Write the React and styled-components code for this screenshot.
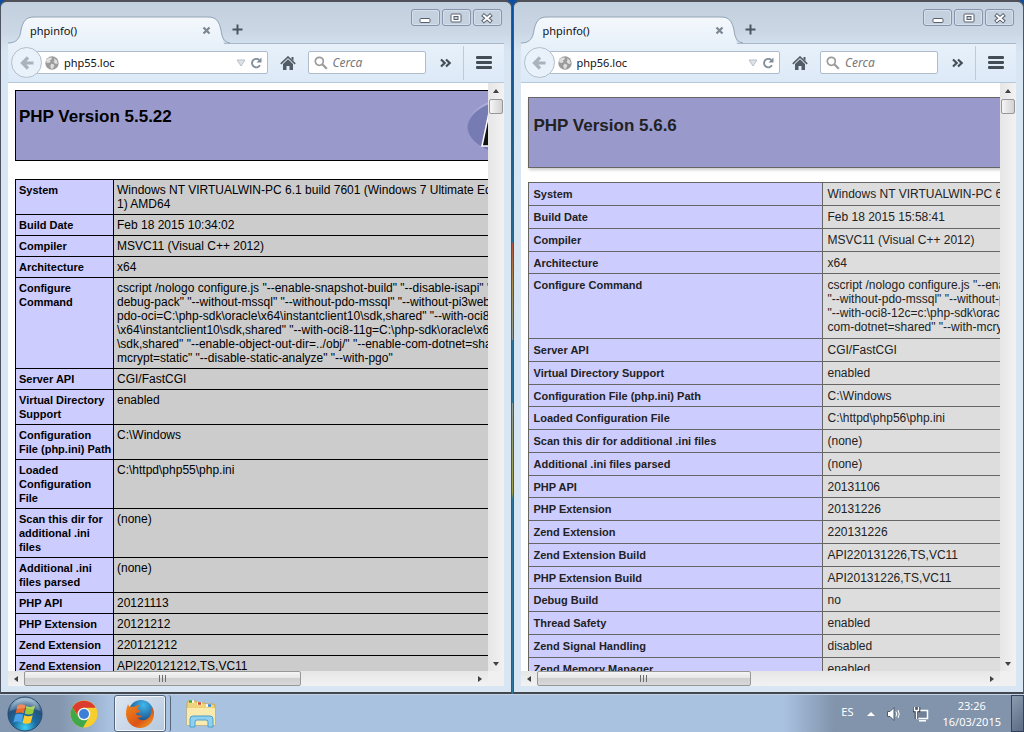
import React from 'react';
import styled, { createGlobalStyle, css } from 'styled-components';

const uiFont = '"Noto Sans", "Open Sans", sans-serif';
const pageFont = '"Liberation Sans", Arial, sans-serif';

const php55 = [
  ['System', ['Windows NT VIRTUALWIN-PC 6.1 build 7601 (Windows 7 Ultimate Edition', '1) AMD64']],
  ['Build Date', ['Feb 18 2015 10:34:02']],
  ['Compiler', ['MSVC11 (Visual C++ 2012)']],
  ['Architecture', ['x64']],
  ['Configure Command', [
    'cscript /nologo configure.js "--enable-snapshot-build" "--disable-isapi" "--',
    'debug-pack" "--without-mssql" "--without-pdo-mssql" "--without-pi3web"',
    'pdo-oci=C:\\php-sdk\\oracle\\x64\\instantclient10\\sdk,shared" "--with-oci8=',
    '\\x64\\instantclient10\\sdk,shared" "--with-oci8-11g=C:\\php-sdk\\oracle\\x64',
    '\\sdk,shared" "--enable-object-out-dir=../obj/" "--enable-com-dotnet=shared"',
    'mcrypt=static" "--disable-static-analyze" "--with-pgo"',
  ]],
  ['Server API', ['CGI/FastCGI']],
  ['Virtual Directory Support', ['enabled']],
  ['Configuration File (php.ini) Path', ['C:\\Windows']],
  ['Loaded Configuration File', ['C:\\httpd\\php55\\php.ini']],
  ['Scan this dir for additional .ini files', ['(none)']],
  ['Additional .ini files parsed', ['(none)']],
  ['PHP API', ['20121113']],
  ['PHP Extension', ['20121212']],
  ['Zend Extension', ['220121212']],
  ['Zend Extension Build', ['API220121212,TS,VC11']],
];

const php56 = [
  ['System', ['Windows NT VIRTUALWIN-PC 6.1']],
  ['Build Date', ['Feb 18 2015 15:58:41']],
  ['Compiler', ['MSVC11 (Visual C++ 2012)']],
  ['Architecture', ['x64']],
  ['Configure Command', [
    'cscript /nologo configure.js "--enable',
    '"--without-pdo-mssql" "--without-pi3',
    '"--with-oci8-12c=c:\\php-sdk\\oracle',
    'com-dotnet=shared" "--with-mcrypt',
  ]],
  ['Server API', ['CGI/FastCGI']],
  ['Virtual Directory Support', ['enabled']],
  ['Configuration File (php.ini) Path', ['C:\\Windows']],
  ['Loaded Configuration File', ['C:\\httpd\\php56\\php.ini']],
  ['Scan this dir for additional .ini files', ['(none)']],
  ['Additional .ini files parsed', ['(none)']],
  ['PHP API', ['20131106']],
  ['PHP Extension', ['20131226']],
  ['Zend Extension', ['220131226']],
  ['Zend Extension Build', ['API220131226,TS,VC11']],
  ['PHP Extension Build', ['API20131226,TS,VC11']],
  ['Debug Build', ['no']],
  ['Thread Safety', ['enabled']],
  ['Zend Signal Handling', ['disabled']],
  ['Zend Memory Manager', ['enabled']],
];

export default function App() {
  return (
    <>
      <GlobalStyle />
      <Screen>
        <Desktop>
          <BrowserWindow id="php55" address="php55.loc" thumb="62%">
            <InfoPage>
              <Banner>
                <h1>PHP Version 5.5.22</h1>
                <PhpLogo />
              </Banner>
              <InfoTable rows={php55} />
            </InfoPage>
          </BrowserWindow>
          <BrowserWindow id="php56" address="php56.loc" thumb="48%">
            <InfoPage $modern>
              <Banner $modern>
                <h1>PHP Version 5.6.6</h1>
              </Banner>
              <InfoTable rows={php56} modern />
            </InfoPage>
          </BrowserWindow>
        </Desktop>
        <Taskbar />
      </Screen>
    </>
  );
}

function InfoTable({ rows, modern }) {
  return (
    <Table $modern={modern}>
      <tbody>
        {rows.map(([label, lines]) => (
          <tr key={label}>
            <th scope="row">{label}</th>
            <td>{lines.join('\n')}</td>
          </tr>
        ))}
      </tbody>
    </Table>
  );
}

function BrowserWindow({ id, address, thumb, children }) {
  return (
    <Frame>
      <TitleBar>
        <Tab>
          <TabShape id={id + '-tab'} />
          <TabTitle>phpinfo()</TabTitle>
          <IconButton aria-label="Close tab">
            <svg width="9" height="9" viewBox="0 0 9 9"><path d="M1.5 1.5l6 6M7.5 1.5l-6 6" stroke="#7d8791" strokeWidth="2.2" /></svg>
          </IconButton>
        </Tab>
        <NewTab aria-label="New tab">
          <svg width="11" height="11" viewBox="0 0 11 11"><path d="M5.5 .5v10M.5 5.5h10" stroke="#4b565f" strokeWidth="2" /></svg>
        </NewTab>
        <Controls>
          <ControlButton aria-label="Minimize">
            <svg width="12" height="12" viewBox="0 0 12 12"><rect x="1" y="6.5" width="10" height="4" rx="1" fill="#fff" stroke="#565f6e" /></svg>
          </ControlButton>
          <ControlButton aria-label="Maximize">
            <svg width="12" height="12" viewBox="0 0 12 12">
              <rect x="1" y="2" width="10" height="8" rx="1" fill="#fff" stroke="#565f6e" />
              <rect x="4" y="4.5" width="4" height="3" fill="#c5d1df" stroke="#565f6e" />
            </svg>
          </ControlButton>
          <ControlButton aria-label="Close">
            <svg width="12" height="12" viewBox="0 0 12 12">
              <path d="M1.5 2.500l9 7.500M10.500 2.500l-9 7.500" stroke="#565f6e" strokeWidth="4" />
              <path d="M2.200 3l7.600 6.400M9.800 3l-7.600 6.400" stroke="#fff" strokeWidth="2" />
            </svg>
          </ControlButton>
        </Controls>
      </TitleBar>
      <Toolbar>
        <BackButton aria-label="Back">
          <svg width="14" height="14" viewBox="0 0 14 14"><path d="M8 1.5L2.500 7 8 12.500M3 7h10.500" fill="none" stroke="#a9b2bd" strokeWidth="3.2" /></svg>
        </BackButton>
        <AddressBar>
          <GlobeIcon />
          <AddressInput id={id + '-address'} aria-label="Address" defaultValue={address} />
          <IconButton aria-label="History">
            <svg width="10" height="8" viewBox="0 0 10 8"><path d="M1 1h8L5 7z" fill="#dfe3e8" stroke="#b9c0c9" /></svg>
          </IconButton>
          <IconButton aria-label="Reload">
            <svg width="12" height="12" viewBox="0 0 12 12">
              <path d="M9.300 3A4.300 4.300 0 1 0 10 8.300" fill="none" stroke="#7f8c99" strokeWidth="1.8" />
              <path d="M11.500 .5v5h-5z" fill="#7f8c99" />
            </svg>
          </IconButton>
        </AddressBar>
        <HomeButton aria-label="Home">
          <svg width="16" height="14" viewBox="0 0 16 14">
            <path d="M3 8l5-4.800L13 8v6H9.500v-4h-3v4H3z" fill="#515c66" />
            <path d="M.8 7.800L8 1l7.200 6.800" fill="none" stroke="#515c66" strokeWidth="1.6" />
            <path d="M11.500 1h2v4l-2-2z" fill="#515c66" />
          </svg>
        </HomeButton>
        <SearchBox>
          <svg width="14" height="14" viewBox="0 0 14 14">
            <circle cx="5.300" cy="5.300" r="4" fill="none" stroke="#9b9b9b" strokeWidth="1.7" />
            <path d="M8.300 8.300l4.500 4.500" stroke="#9b9b9b" strokeWidth="2.2" />
          </svg>
          <SearchInput id={id + '-search'} aria-label="Cerca" placeholder="Cerca" />
        </SearchBox>
        <MoreButton aria-label="More tools">
          <svg width="12" height="10" viewBox="0 0 12 10"><path d="M1 1.5L4.700 5 1 8.500M6 1.500L9.700 5 6 8.500" fill="none" stroke="#434d56" strokeWidth="2.2" /></svg>
        </MoreButton>
        <MenuButton aria-label="Menu">
          <svg width="16" height="13" viewBox="0 0 16 13"><path d="M1.200 1.500h13.600M1.200 6.500h13.600M1.200 11.500h13.600" stroke="#434d56" strokeWidth="2.8" strokeLinecap="round" /></svg>
        </MenuButton>
      </Toolbar>
      <Viewport>
        <Page>{children}</Page>
        <VerticalBar>
          <Arrow direction="up" />
          <VerticalThumb />
          <Arrow direction="down" />
        </VerticalBar>
        <HorizontalBar>
          <Arrow direction="left" />
          <Track>
            <HorizontalThumb $width={thumb}>
              <svg width="8" height="7" viewBox="0 0 8 7"><path d="M.5 0v7M3.500 0v7M6.500 0v7" stroke="#6d6d6d" /></svg>
            </HorizontalThumb>
          </Track>
          <Arrow direction="right" />
        </HorizontalBar>
      </Viewport>
    </Frame>
  );
}

function TabShape({ id }) {
  return (
    <TabSvg viewBox="0 0 216 28" preserveAspectRatio="none">
      <defs>
        <linearGradient id={id} x1="0" y1="0" x2="0" y2="1">
          <stop offset="0" stopColor="#f4f8fc" />
          <stop offset="1" stopColor="#e8f1fa" />
        </linearGradient>
      </defs>
      <path d="M0 28V27C9 27 12 22 13 14C15 5 18 1 26 1H200C208 1 211 5 213 14C214 22 216 26 216 28z" fill={`url(#${id})`} />
      <path d="M0 27C9 27 12 22 13 14C15 5 18 1 26 1H200C208 1 211 5 213 14C214 22 216 26 222 27" fill="none" stroke="#93a3b5" />
    </TabSvg>
  );
}

function GlobeIcon() {
  return (
    <svg width="14" height="14" viewBox="0 0 14 14">
      <circle cx="7" cy="7" r="6.700" fill="#9b9b9b" />
      <path d="M1 4.500C2 2 4.500 1 6.500 1.500L7 3 5 4.500 5.500 6 3.500 7 1.500 6.500zM9 2l3 2.500.8 3-2 .5-2.300-2 1-2zM6.500 7.500l3 1.500-1.500 3.500-2 .3-.8-3z" fill="#dedede" />
    </svg>
  );
}

function PhpLogo() {
  return (
    <LogoSvg width="120" height="67" viewBox="0 0 120 67">
      <defs>
        <linearGradient id="logoRim" x1="0" y1="0" x2="0" y2="1">
          <stop offset="0" stopColor="#b9bce0" />
          <stop offset="1" stopColor="#5c5f9c" />
        </linearGradient>
      </defs>
      <ellipse cx="60" cy="34" rx="59" ry="31" fill="url(#logoRim)" />
      <ellipse cx="61" cy="35" rx="59" ry="30" fill="#777bb4" />
      <path d="M24 16h22q12 2 9 15-3 12-15 12h-9l-2 11H16z" fill="#111" stroke="#fff" strokeWidth="1.5" />
    </LogoSvg>
  );
}

const arrowPaths = {
  up: 'M1 6l3-4 3 4z',
  down: 'M1 2l3 4 3-4z',
  left: 'M6 1L2 4l4 3z',
  right: 'M2 1l4 3-4 3z',
};

function Arrow({ direction }) {
  return (
    <ArrowButton aria-label={'Scroll ' + direction}>
      <svg width="8" height="8" viewBox="0 0 8 8"><path d={arrowPaths[direction]} fill="#404040" /></svg>
    </ArrowButton>
  );
}

function Taskbar() {
  return (
    <Bar>
      <StartButton aria-label="Start">
        <svg width="36" height="36" viewBox="0 0 36 36">
          <defs>
            <radialGradient id="orb" cx=".5" cy=".9" r=".85">
              <stop offset="0" stopColor="#3fd0f5" />
              <stop offset=".4" stopColor="#1c6ba0" />
              <stop offset=".75" stopColor="#24527f" />
              <stop offset="1" stopColor="#9db9d0" />
            </radialGradient>
          </defs>
          <circle cx="18" cy="18" r="17" fill="url(#orb)" stroke="#27476b" />
          <path d="M10.500 9.500q4-2.500 8 0l-1.800 8q-4-2-8 0z" fill="#ee6a2c" />
          <path d="M19.500 10q4 2 8.500-.5l-2 8q-4 2.200-8.300 0z" fill="#9ccb3c" />
          <path d="M8.300 18.800q4-2.200 8 0l-1.800 7.700q-4-2-8 0z" fill="#4aa3e8" />
          <path d="M17.400 19.200q4 2.200 8.300 0l-2 7.600q-4 2-8.200 0z" fill="#fbca2e" />
          <path d="M3 15C5 6 12 3 18 3s13 3 15 12q-15-6-30 0z" fill="#fff" opacity=".22" />
        </svg>
      </StartButton>
      <TaskButton aria-label="Google Chrome">
        <svg width="28" height="28" viewBox="0 0 28 28">
          <circle cx="14" cy="14" r="13.500" fill="#f7ce2c" />
          <path d="M2.300 7.300A13.500 13.500 0 0 1 25.700 7.700H14a6.300 6.300 0 0 0-6 8z" fill="#db3c2e" />
          <path d="M2.300 7.300A13.500 13.500 0 0 0 13 27.500l6-10.200a6.300 6.300 0 0 1-10.700-.5z" fill="#3ea84a" />
          <circle cx="14" cy="14" r="6.300" fill="#f2f5f8" />
          <circle cx="14" cy="14" r="5" fill="#3d7fd6" />
        </svg>
      </TaskButton>
      <TaskGroup>
        <TaskButton $active aria-label="Mozilla Firefox">
          <svg width="30" height="30" viewBox="0 0 30 30">
            <defs>
              <radialGradient id="planet" cx=".6" cy=".2" r=".8">
                <stop offset="0" stopColor="#3fb8ec" />
                <stop offset="1" stopColor="#133a77" />
              </radialGradient>
              <linearGradient id="fox" x1="0" y1="0" x2="1" y2="1">
                <stop offset="0" stopColor="#f08a1c" />
                <stop offset=".6" stopColor="#dc5216" />
                <stop offset="1" stopColor="#f5b02a" />
              </linearGradient>
            </defs>
            <circle cx="16" cy="13.500" r="12.500" fill="url(#planet)" />
            <path d="M3 5q-2.500 6-2 11C2 24 8 29 15 29c8 0 13.500-6 14-13 .2-4-1-7-3-9 1 6 0 11-4 13-3 2-8 1.500-9.500-1.500 2 .5 3.500 0 5-1.500-2-.8-5 .2-6.500-2 .2-1.500 2.500-1.500 4.500-1.700 0-1.800-2-2.300-2.800-3.300.2-1.700 1-3 2.300-4C12 6 10 7 9 8 7 7.500 6 7.500 5 8q-1.500-1-2-3z" fill="url(#fox)" />
          </svg>
        </TaskButton>
      </TaskGroup>
      <TaskButton aria-label="Windows Explorer">
        <svg width="32" height="30" viewBox="0 0 32 30">
          <path d="M2 4l1-2h8l1 2h8l1 1h8l1 2v19H2z" fill="#eed27c" stroke="#c9a94e" />
          <path d="M4 2.500h5M12 4.500h5M21 6.500h5" stroke="#fff" strokeWidth="2.5" />
          <path d="M4 2.500h3" stroke="#32a836" strokeWidth="2.5" />
          <path d="M13 4.500h3" stroke="#d8432f" strokeWidth="2.5" />
          <path d="M23 6.500h3" stroke="#3586dd" strokeWidth="2.5" />
          <path d="M2 9h28v17H2z" fill="#f9eab0" />
          <path d="M5 28v-8q0-3 3-3h17q3 0 3 3v8h-5v-5q0-2-2-2h-9q-2 0-2 2v5z" fill="#8fd0f0" stroke="#4c9fcb" />
        </svg>
      </TaskButton>
      <Tray>
        <Language>ES</Language>
        <IconButton aria-label="Show hidden icons">
          <svg width="8" height="5" viewBox="0 0 8 5"><path d="M0 5l4-4 4 4z" fill="#fff" /></svg>
        </IconButton>
        <IconButton aria-label="Volume">
          <svg width="16" height="16" viewBox="0 0 16 16">
            <path d="M1.500 5.500h2.500L8 1.500v13L4 10.500H1.500z" fill="#fff" stroke="#4d5a6c" />
            <path d="M10 5.500q1.500 2.500 0 5M12 4q2.500 4 0 8" fill="none" stroke="#fff" />
          </svg>
        </IconButton>
        <IconButton aria-label="Network">
          <svg width="16" height="16" viewBox="0 0 16 16">
            <rect x="4.500" y="4.500" width="10" height="8" fill="#6f8097" stroke="#fff" strokeWidth="1.5" />
            <path d="M6 14.800h7" stroke="#fff" strokeWidth="1.5" />
            <path d="M1.500 1v3.500h4V1M3.500 4.500V13" fill="none" stroke="#27303d" strokeWidth="3.5" />
            <path d="M1.500 1v3.500h4V1M3.500 4.500V13" fill="none" stroke="#fff" strokeWidth="1.6" />
          </svg>
        </IconButton>
        <Clock>
          <span>23:26</span>
          <span>16/03/2015</span>
        </Clock>
        <ShowDesktop aria-label="Show desktop" />
      </Tray>
    </Bar>
  );
}

const GlobalStyle = createGlobalStyle`
  * {
    box-sizing: border-box;
  }
  body {
    margin: 0;
    font-family: ${uiFont};
    font-size: 11px;
  }
  button {
    margin: 0;
    padding: 0;
    border: 0;
    background: none;
    color: inherit;
    font: inherit;
  }
  svg {
    display: block;
    flex: none;
  }
`;

const Screen = styled.div`
  height: 100vh;
  display: flex;
  flex-direction: column;
  overflow: hidden;
`;

const Desktop = styled.main`
  flex: 1;
  min-height: 0;
  display: grid;
  grid-template-columns: 1fr 1fr;
  gap: 1px;
  background: linear-gradient(#0b4fa5, #1f5f8c 20%, #2a6f98 35%, #b5503c 35%, #a8904c 41%, #8c9c9c 49%, #2a789f 49%, #2a789f 58%, #8c9c9c 58%, #a0a040 71%, #2a789f 72%);
`;

const Frame = styled.section`
  min-width: 0;
  min-height: 0;
  display: flex;
  flex-direction: column;
  padding: 0 7px 6px;
  border: 1px solid #4d5660;
  border-top: 2px solid #4f5058;
  border-bottom: 2px solid #43474f;
  border-radius: 7px 7px 0 0;
  background: linear-gradient(#c2cfde, #cbd7e4 30px, #d8e5f2 50px);
`;

const TitleBar = styled.header`
  height: 42px;
  display: flex;
  align-items: flex-end;
  border-bottom: 1px solid #a9b9ca;
`;

const Tab = styled.div`
  position: relative;
  width: 216px;
  height: 28px;
  margin-bottom: -1px;
  padding: 0 11px 0 22px;
  display: flex;
  align-items: center;
  justify-content: space-between;
`;

const TabSvg = styled.svg`
  position: absolute;
  inset: 0;
  width: 100%;
  height: 100%;
  overflow: visible;
`;

const TabTitle = styled.span`
  position: relative;
  color: #111;
`;

const IconButton = styled.button`
  position: relative;
  padding: 2px;
`;

const NewTab = styled.button`
  padding: 8px;
`;

const Controls = styled.div`
  align-self: flex-start;
  margin: 7px 2px 0 auto;
  display: flex;
  gap: 2px;
`;

const ControlButton = styled.button`
  width: 29px;
  height: 17px;
  display: flex;
  align-items: center;
  justify-content: center;
  border: 1px solid #8593ab;
  border-radius: 3px;
  background: #c5d1df;
  box-shadow: inset 0 0 0 1px #d6e0ea;
`;

const Toolbar = styled.div`
  height: 39px;
  display: flex;
  align-items: center;
  padding: 0 3px 1px;
  border-bottom: 1px solid #b4c7db;
  background: linear-gradient(#e8f1fa, #dce9f7);
`;

const BackButton = styled.button`
  position: relative;
  width: 31px;
  height: 31px;
  display: flex;
  align-items: center;
  justify-content: center;
  border: 1px solid #b3bfcd;
  border-radius: 50%;
  background: #e9f1fa;
`;

const AddressBar = styled.div`
  flex: 1;
  min-width: 0;
  height: 23px;
  margin-left: -5px;
  padding: 0 3px 0 7px;
  display: flex;
  align-items: center;
  border: 1px solid #aebccc;
  border-radius: 0 2px 2px 0;
  background: #fff;
`;

const inputReset = css`
  flex: 1;
  min-width: 0;
  padding: 0 5px;
  border: 0;
  outline: 0;
  background: none;
  font: 11px ${uiFont};
  color: #111;
`;

const AddressInput = styled.input`
  ${inputReset}
`;

const HomeButton = styled.button`
  padding: 0 12px;
`;

const SearchBox = styled.div`
  width: 118px;
  height: 23px;
  padding-left: 5px;
  display: flex;
  align-items: center;
  border: 1px solid #aebccc;
  border-radius: 2px;
  background: #fff;
`;

const SearchInput = styled.input`
  ${inputReset}
  font-size: 12px;
  &::placeholder {
    color: #777;
    opacity: 1;
    font-style: italic;
  }
`;

const MoreButton = styled.button`
  padding: 0 11px 0 14px;
`;

const MenuButton = styled.button`
  height: 34px;
  padding: 0 9px 0 12px;
  border-left: 1px solid #bccbdb;
`;

const Viewport = styled.div`
  flex: 1;
  min-height: 0;
  display: grid;
  grid-template-columns: 1fr 16px;
  grid-template-rows: 1fr 15px;
  background: #f0f0f0;
`;

const Page = styled.div`
  min-width: 0;
  min-height: 0;
  overflow: hidden;
  background: #fff;
`;

const InfoPage = styled.div`
  width: ${(p) => (p.$modern ? '934px' : '600px')};
  margin: ${(p) => (p.$modern ? '14px 7px' : '7px')};
  font-family: ${pageFont};
  color: ${(p) => (p.$modern ? '#222' : '#000')};
`;

const Banner = styled.div`
  height: 71px;
  display: flex;
  justify-content: space-between;
  padding: ${(p) => (p.$modern ? '18px 5px' : '16px 3px')};
  margin-bottom: ${(p) => (p.$modern ? '14px' : '18px')};
  border: 1px solid ${(p) => (p.$modern ? '#666' : '#000')};
  background: #9999cc;
  box-shadow: ${(p) => (p.$modern ? '1px 2px 3px #ccc' : 'none')};
  h1 {
    margin: 0;
    font-size: 17px;
    line-height: 20px;
  }
`;

const LogoSvg = styled.svg`
  margin: -15px 25px 0 0;
`;

const Table = styled.table`
  width: 100%;
  border-collapse: collapse;
  table-layout: fixed;
  font-size: 12px;
  line-height: 14px;
  th,
  td {
    padding: ${(p) => (p.$modern ? '4px 5px' : '3px')};
    border: 1px solid ${(p) => (p.$modern ? '#666' : '#000')};
    vertical-align: top;
    text-align: left;
  }
  th {
    width: ${(p) => (p.$modern ? '294px' : '98px')};
    padding-right: 0;
    background: #ccccff;
    font-size: 11px;
  }
  td {
    background: ${(p) => (p.$modern ? '#ddd' : '#ccc')};
    white-space: pre;
    overflow: hidden;
  }
  ${(p) =>
    p.$modern &&
    css`
      tr:nth-child(4n) > * {
        padding-bottom: 3px;
      }
    `}
`;

const VerticalBar = styled.div`
  display: flex;
  flex-direction: column;
  background: linear-gradient(90deg, #e6e6e6, #f2f2f2);
  button:last-child {
    margin-top: auto;
  }
`;

const ArrowButton = styled.button`
  width: 16px;
  height: 15px;
  display: flex;
  align-items: center;
  justify-content: center;
`;

const VerticalThumb = styled.div`
  height: 15px;
  margin: 1px;
  border: 1px solid #979797;
  border-radius: 2px;
  background: linear-gradient(90deg, #f5f5f5, #d2d2d2);
`;

const HorizontalBar = styled.div`
  display: flex;
  background: linear-gradient(#e6e6e6, #f2f2f2);
`;

const Track = styled.div`
  flex: 1;
`;

const HorizontalThumb = styled.div`
  width: ${(p) => p.$width};
  height: 15px;
  display: flex;
  align-items: center;
  justify-content: center;
  border: 1px solid #979797;
  border-radius: 2px;
  background: linear-gradient(#f5f5f5, #e4e4e4 50%, #cfcfcf 50%, #d8d8d8);
`;

const Bar = styled.footer`
  height: 38px;
  display: flex;
  align-items: center;
  padding-left: 7px;
  border-top: 1px solid #c3d2e4;
  background: linear-gradient(90deg, #8497b1, #8396ae 60px, #a9c2e0 110px, #a9c2e0 calc(100% - 240px), #8194ac calc(100% - 190px));
`;

const StartButton = styled.button`
  margin-right: 19px;
`;

const TaskButton = styled.button`
  width: ${(p) => (p.$active ? '52px' : '44px')};
  height: 37px;
  display: flex;
  align-items: center;
  justify-content: center;
  ${(p) =>
    p.$active &&
    css`
      border: 1px solid #56667c;
      border-radius: 3px;
      background: linear-gradient(135deg, #dde6f1, #b6c9e0);
      box-shadow: inset 0 0 0 1px #eef4fa;
    `}
`;

const TaskGroup = styled.div`
  margin: 0 8px;
  padding-right: 4px;
  border-right: 1px solid #56667c;
  border-radius: 3px;
`;

const Tray = styled.div`
  height: 100%;
  margin-left: auto;
  display: flex;
  align-items: center;
  gap: 7px;
  color: #fff;
`;

const Language = styled.span`
  margin-right: 5px;
  padding-bottom: 4px;
`;

const Clock = styled.time`
  display: flex;
  flex-direction: column;
  align-items: center;
  margin-left: 4px;
  line-height: 16px;
`;

const ShowDesktop = styled.button`
  width: 13px;
  height: 100%;
  margin-left: 3px;
  border: 1px solid #33415a;
  background: linear-gradient(135deg, #8b9bb0, #5b6c83);
`;
